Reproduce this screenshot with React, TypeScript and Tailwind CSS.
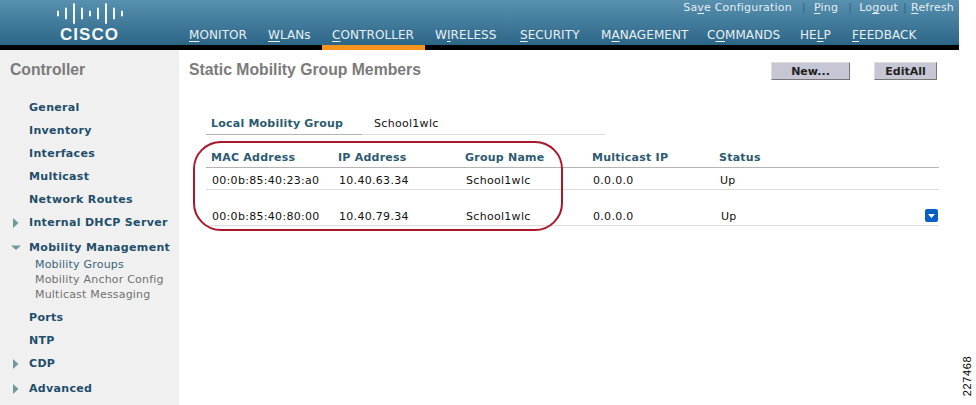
const font = "font-['DejaVu_Sans',Verdana,sans-serif]";

function U({ children }: { children: string }) {
  return <span className="underline underline-offset-2 decoration-1">{children}</span>;
}

const NAV = [
  { id: "monitor", w: "w-[79px]", label: <><U>M</U>ONITOR</> },
  { id: "wlans", w: "w-[64px]", label: <><U>W</U>LANs</> },
  { id: "controller", w: "w-[103px]", label: <><U>C</U>ONTROLLER</> },
  { id: "wireless", w: "w-[85px]", label: <>W<U>I</U>RELESS</> },
  { id: "security", w: "w-[81px]", label: <><U>S</U>ECURITY</> },
  { id: "management", w: "w-[106px]", label: <>M<U>A</U>NAGEMENT</> },
  { id: "commands", w: "w-[93px]", label: <>C<U>O</U>MMANDS</> },
  { id: "help", w: "w-[52px]", label: <>HE<U>L</U>P</> },
  { id: "feedback", w: "w-[80px]", label: <><U>F</U>EEDBACK</> },
];

function CiscoLogo() {
  // bar x / height, 9 bars in the usual short-mid-tall rhythm
  const bars = [
    [2, 6], [10, 12], [18, 21], [26, 12], [34, 6], [42, 12], [50, 21], [58, 12], [66, 6],
  ];
  return (
    <div className="flex w-[179px] flex-col items-center pt-[3px]">
      <svg width="68" height="21" viewBox="0 0 68 21" className="block">
        {bars.map(([x, h]) => (
          <rect key={x} x={x - 1} y={(21 - h) / 2} width="2" height={h} rx="1" fill="#f4f8fa" />
        ))}
      </svg>
      <span className="mt-[1px] font-['Liberation_Sans',Arial,sans-serif] text-[17px] leading-[20px] font-bold tracking-[1px] text-[#f4f8fa]">
        CISCO
      </span>
    </div>
  );
}

function Header() {
  return (
    <header className="w-[959px]">
      <div className="flex h-[45px] bg-gradient-to-b from-[#5890b0] to-[#2c6686]">
        <CiscoLogo />
        <div className="flex flex-1 flex-col">
          <div className="flex h-[26px] justify-end pr-[5px] pt-[1px] text-[11px] leading-[13px] tracking-[0.2px] text-[#e4eef3]">
            <span>Sa<U>v</U>e Configuration</span>
            <span className="ml-[10px] w-[12px] text-[#2c6686]">|</span>
            <span><U>P</U>ing</span>
            <span className="ml-[10px] w-[11px] text-[#2c6686]">|</span>
            <span>Lo<U>g</U>out</span>
            <span className="ml-[5px] w-[8px] text-[#2c6686]">|</span>
            <span><U>R</U>efresh</span>
          </div>
          <nav className="flex pl-[10px] text-[12px] leading-[18px] tracking-[0.08px] text-[#e8f0f4]">
            {NAV.map((n) => (
              <span key={n.id} className={`${n.w} whitespace-nowrap`}>{n.label}</span>
            ))}
          </nav>
        </div>
      </div>
      <div className="flex h-[5px] bg-black pl-[322px]">
        <div className="h-[5px] w-[103px] bg-[#f7941d]" />
      </div>
    </header>
  );
}

function Arrow({ open }: { open?: boolean }) {
  return (
    <svg width="10" height="10" viewBox="0 0 10 10" className="absolute left-[-18px] top-[3px]">
      {open ? <path d="M0 2.5 L10 2.5 L5 7 Z" fill="#6f9a9c" /> : <path d="M2 0 L7.5 5 L2 10 Z" fill="#6f9a9c" />}
    </svg>
  );
}

const MENU: { label: string; h: string; arrow?: "open" | "closed"; subs?: string[] }[] = [
  { label: "General", h: "h-[23px]" },
  { label: "Inventory", h: "h-[23px]" },
  { label: "Interfaces", h: "h-[23px]" },
  { label: "Multicast", h: "h-[23px]" },
  { label: "Network Routes", h: "h-[23px]" },
  { label: "Internal DHCP Server", h: "h-[25px]", arrow: "closed" },
  { label: "Mobility Management", h: "h-[70px]", arrow: "open", subs: ["Mobility Groups", "Mobility Anchor Config", "Multicast Messaging"] },
  { label: "Ports", h: "h-[23px]" },
  { label: "NTP", h: "h-[23px]" },
  { label: "CDP", h: "h-[25px]", arrow: "closed" },
  { label: "Advanced", h: "h-[17px]", arrow: "closed" },
];

function Sidebar() {
  return (
    <aside className="h-[355px] w-[179px] shrink-0 overflow-hidden bg-[#f0f0f0]">
      <h2 className="pl-[10px] pt-[11px] font-['Liberation_Sans',Arial,sans-serif] text-[15.75px] leading-[18px] font-bold text-[#7b7b7b]">
        Controller
      </h2>
      <ul className="mt-[21px] pl-[29px]">
        {MENU.map((m) => (
          <li key={m.label} className={`relative ${m.h}`}>
            {m.arrow && <Arrow open={m.arrow === "open"} />}
            <div className="whitespace-nowrap text-[11px] leading-[16px] font-bold tracking-[0.33px] text-[#1f4e6a]">
              {m.label}
            </div>
            {m.subs && (
              <div className="ml-[6px] mt-[1px] text-[11px] leading-[15px] tracking-[0.2px] text-[#707070]">
                {m.subs.map((s, i) => (
                  <div key={s} className={i === 0 ? "text-[#3c6478]" : ""}>{s}</div>
                ))}
              </div>
            )}
          </li>
        ))}
      </ul>
    </aside>
  );
}

const COLS = ["w-[127px]", "w-[127px]", "w-[127px]", "w-[127px]", "w-[206px]"];

const ROWS = [
  { mac: "00:0b:85:40:23:a0", ip: "10.40.63.34", h: "h-[22px]", up: "" },
  { mac: "00:0b:85:40:80:00", ip: "10.40.79.34", h: "h-[36px]", up: "pl-[1px]", more: true },
];

function MemberTable() {
  return (
    <div className="mt-[12px] w-[733px] text-[11px] text-[#111]">
      <div className="flex h-[21px] items-center border-b border-[#b4b4b4] pl-[5px] pt-[2px] text-[11px] font-bold tracking-[0.24px] text-[#2c5a70]">
        {["MAC Address", "IP Address", "Group Name", "Multicast IP", "Status"].map((h, i) => (
          <span key={h} className={COLS[i]}>{h}</span>
        ))}
      </div>
      {ROWS.map((r) => (
        <div key={r.mac} className={`relative flex ${r.h} items-end border-b border-[#dcdcdc] pb-[1px] pl-[6px] leading-[14px] tracking-[0.3px]`}>
          <span className={COLS[0]}>{r.mac}</span>
          <span className={COLS[1]}>{r.ip}</span>
          <span className={COLS[2]}>School1wlc</span>
          <span className={COLS[3]}>0.0.0.0</span>
          <span className={`${COLS[4]} ${r.up}`}>Up</span>
          {r.more && (
            <span className="absolute right-[1px] top-[19px] flex h-[13px] w-[13px] items-center justify-center rounded-[2px] bg-[#0b5fc4]">
              <svg width="7" height="4" viewBox="0 0 7 4"><path d="M0 0H7L3.5 4Z" fill="#fff" /></svg>
            </span>
          )}
        </div>
      ))}
    </div>
  );
}

function Content() {
  return (
    <main className="relative flex-1 pl-[10px]">
      <div className="flex h-[43px] items-start pt-[11px]">
        <h1 className="flex-1 font-['Liberation_Sans',Arial,sans-serif] text-[15.75px] leading-[18px] font-bold text-[#7b7b7b]">
          Static Mobility Group Members
        </h1>
        <button className="mt-[1px] h-[18px] w-[79px] border border-[#ddd] border-b-[#777] border-r-[#777] bg-[#c6c6d4] text-center text-[11px] leading-[15px] font-bold text-[#222]">
          New...
        </button>
        <button className="ml-[24px] mr-[39px] mt-[1px] h-[18px] w-[63px] border border-[#ddd] border-b-[#777] border-r-[#777] bg-[#c6c6d4] text-center text-[11px] leading-[15px] font-bold text-[#222]">
          EditAll
        </button>
      </div>
      <div className="ml-[17px]">
        <div className="mt-[21px] flex h-[21px] w-[399px] border-b border-[#dcdcdc] pl-[5px] text-[11px] leading-[19px]">
          <span className="w-[163px] font-bold tracking-[0.22px] text-[#2c5a70]">Local Mobility Group</span>
          <span className="tracking-[0.3px] text-[#111]">School1wlc</span>
        </div>
        <div className="-mt-[1px] h-[1px] w-[156px] bg-[#b4b4b4]" />
        <MemberTable />
      </div>
      <div className="absolute left-[14px] top-[91px] h-[90px] w-[370px] rounded-[28px] border-2 border-[#a8172a]" />
    </main>
  );
}

export default function App() {
  return (
    <div className={`${font} relative h-[405px] w-[976px] overflow-hidden bg-white`}>
      <Header />
      <div className="flex">
        <Sidebar />
        <Content />
      </div>
      <span className="absolute bottom-[23px] right-[-11px] rotate-[-90deg] font-['Liberation_Sans',Arial,sans-serif] text-[11px] leading-[12px] tracking-[0.6px] text-black">
        227468
      </span>
    </div>
  );
}
